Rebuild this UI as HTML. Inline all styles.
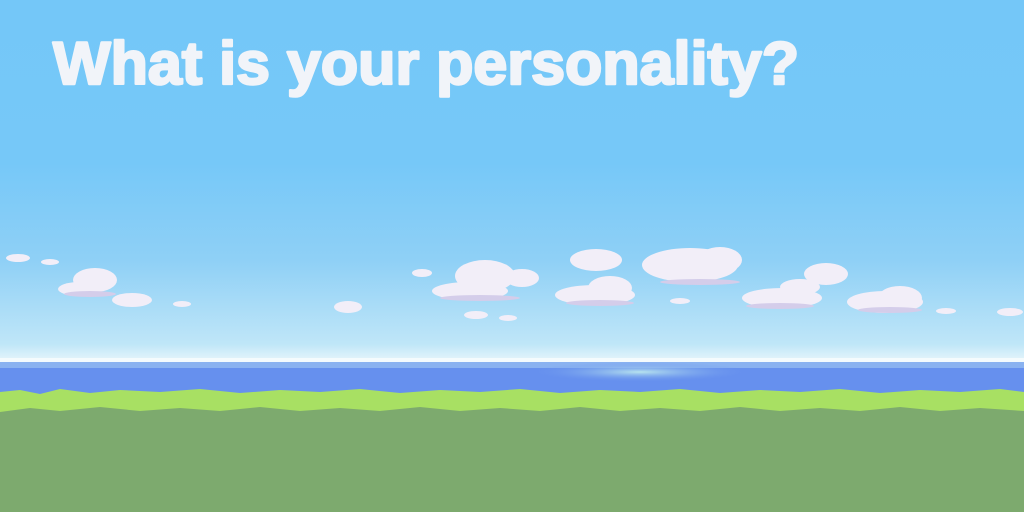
<!DOCTYPE html>
<html><head><meta charset="utf-8"><style>
html,body{margin:0;padding:0;width:1024px;height:512px;overflow:hidden}
</style></head><body>
<svg width="1024" height="512" viewBox="0 0 1024 512" xmlns="http://www.w3.org/2000/svg">
<defs>
<linearGradient id="sky" x1="0" y1="0" x2="0" y2="1">
<stop offset="0" stop-color="#74c7f8"/>
<stop offset="0.45" stop-color="#76c8f8"/>
<stop offset="0.72" stop-color="#8fd0f6"/>
<stop offset="0.95" stop-color="#bfe6f8"/>
<stop offset="1" stop-color="#e8f6fb"/>
</linearGradient>
<radialGradient id="glow" cx="0.5" cy="0.5" r="0.5">
<stop offset="0" stop-color="#b8e4ee"/>
<stop offset="1" stop-color="#6690ee" stop-opacity="0"/>
</radialGradient>
</defs>
<rect width="1024" height="362" fill="url(#sky)"/>
<rect y="358" width="1024" height="4" fill="#f4fbfd"/>
<rect y="362" width="1024" height="6" fill="#8ab2f0"/>
<rect y="368" width="1024" height="30" fill="#6690ee"/>
<ellipse cx="640" cy="372" rx="110" ry="10" fill="url(#glow)"/>
<path d="M0 398 L0 392 L20 390 L40 394 L60 389 L90 393 L120 390 L160 392 L200 389 L240 393 L280 390 L320 392 L360 389 L400 393 L440 390 L480 392 L520 389 L560 393 L600 390 L640 392 L680 389 L720 393 L760 390 L800 392 L840 389 L880 393 L920 390 L960 392 L1000 389 L1024 392 L1024 512 L0 512Z" fill="#a8e063"/>
<path d="M0 412 L30 408 L60 411 L100 407 L140 411 L180 408 L220 411 L260 407 L300 411 L340 408 L380 411 L420 407 L460 411 L500 408 L540 411 L580 407 L620 411 L660 408 L700 411 L740 407 L780 411 L820 408 L860 411 L900 407 L940 411 L980 408 L1024 411 L1024 512 L0 512Z" fill="#7daa6e"/>
<g fill="#f2eef8">
<ellipse cx="18" cy="258" rx="12" ry="4"/>
<ellipse cx="50" cy="262" rx="9" ry="3"/>
<ellipse cx="95" cy="280" rx="22" ry="12"/><ellipse cx="80" cy="289" rx="22" ry="7"/>
<ellipse cx="132" cy="300" rx="20" ry="7"/>
<ellipse cx="182" cy="304" rx="9" ry="3"/>
<ellipse cx="348" cy="307" rx="14" ry="6"/>
<ellipse cx="422" cy="273" rx="10" ry="4"/>
<ellipse cx="485" cy="276" rx="30" ry="16"/><ellipse cx="470" cy="291" rx="38" ry="9"/><ellipse cx="522" cy="278" rx="17" ry="9"/>
<ellipse cx="596" cy="260" rx="26" ry="11"/>
<ellipse cx="595" cy="295" rx="40" ry="10"/><ellipse cx="610" cy="288" rx="22" ry="12"/>
<ellipse cx="690" cy="265" rx="48" ry="17"/><ellipse cx="720" cy="260" rx="22" ry="13"/>
<ellipse cx="680" cy="301" rx="10" ry="3"/>
<ellipse cx="476" cy="315" rx="12" ry="4"/><ellipse cx="508" cy="318" rx="9" ry="3"/>
<ellipse cx="782" cy="298" rx="40" ry="10"/><ellipse cx="826" cy="274" rx="22" ry="11"/><ellipse cx="800" cy="287" rx="20" ry="8"/>
<ellipse cx="885" cy="302" rx="38" ry="11"/><ellipse cx="900" cy="298" rx="22" ry="12"/>
<ellipse cx="946" cy="311" rx="10" ry="3"/>
<ellipse cx="1010" cy="312" rx="13" ry="4"/>
</g>
<g fill="#d4cdea">
<ellipse cx="90" cy="294" rx="26" ry="3"/><ellipse cx="480" cy="298" rx="40" ry="3"/>
<ellipse cx="600" cy="303" rx="34" ry="3"/><ellipse cx="700" cy="282" rx="40" ry="3"/>
<ellipse cx="890" cy="310" rx="32" ry="3"/><ellipse cx="780" cy="306" rx="34" ry="3"/>
</g>
<text x="53" y="84" font-family="Liberation Sans, sans-serif" font-weight="bold" font-size="60" fill="#f1f4f9" stroke="#f1f4f9" stroke-width="2.5" stroke-linejoin="round" textLength="746" lengthAdjust="spacingAndGlyphs">What is your personality?</text>
</svg>
</body></html>
